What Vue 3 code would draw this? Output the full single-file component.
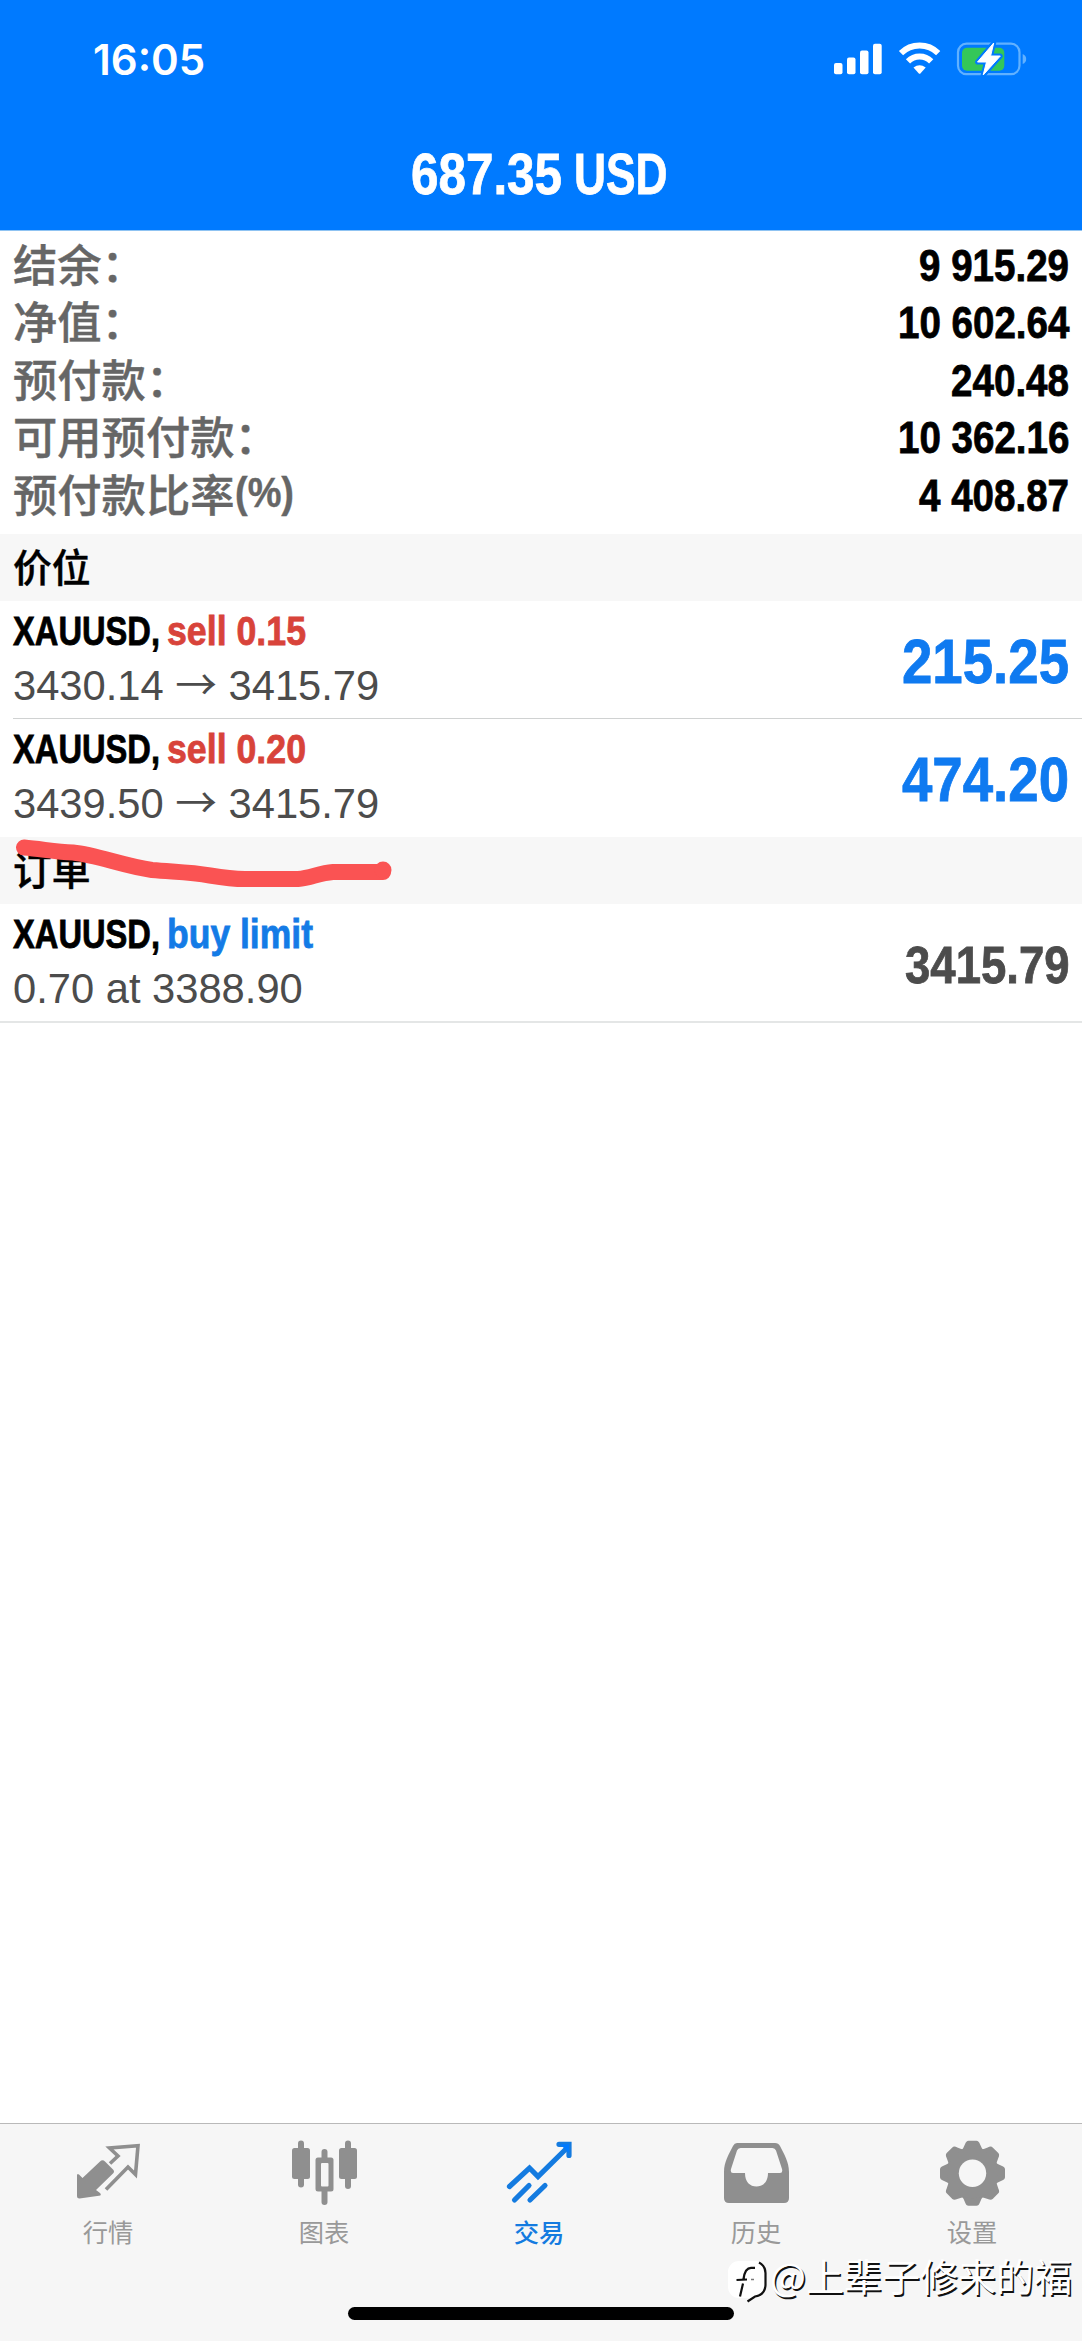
<script setup>
import { h } from 'vue'

// Advance widths of the bold face, in em, for the characters that differ from a digit.
const ADVANCE = {
  ' ': 0.278, '.': 0.278, ',': 0.278, ':': 0.333, '(': 0.333, ')': 0.333, '%': 0.889,
  X: 0.667, A: 0.722, U: 0.722, S: 0.667, D: 0.722,
  l: 0.278, i: 0.278, t: 0.333, m: 0.889, b: 0.611, u: 0.611,
}

// One line of bold text condensed to the width w at font size s.
const FitText = ({ t, w, s }) => {
  const natural = [...t].reduce((sum, c) => sum + (ADVANCE[c] ?? 0.556), 0) * s
  return h('span', {
    style: {
      display: 'block', flex: 'none', width: `${w}px`, height: `${s}px`,
      fontSize: `${s}px`, lineHeight: `${s}px`, whiteSpace: 'pre',
    },
  }, [
    h('span', {
      style: {
        display: 'block', width: 'max-content',
        transformOrigin: '0 50%', transform: `scaleX(${w / natural})`,
      },
    }, t),
  ])
}
FitText.props = ['t', 'w', 's']

const summary = [
  { label: '结余：', value: '9 915.29', w: 150 },
  { label: '净值：', value: '10 602.64', w: 171.4 },
  { label: '预付款：', value: '240.48', w: 118 },
  { label: '可用预付款：', value: '10 362.16', w: 171.4 },
  { label: '预付款比率', unit: '(%)', value: '4 408.87', w: 150 },
]

const positions = [
  { side: 'sell 0.15', from: '3430.14', to: '3415.79', profit: '215.25' },
  { side: 'sell 0.20', from: '3439.50', to: '3415.79', profit: '474.20' },
]
</script>

<template>
  <div class="screen">
    <header class="top">
      <div class="status">
        <span class="clock">16:05</span>
        <svg class="status-icons" width="200" height="40" viewBox="0 0 200 40">
          <g fill="#fff">
            <rect x="4" y="23" width="8.5" height="11.3" rx="2" />
            <rect x="17" y="17.5" width="8.5" height="16.8" rx="2" />
            <rect x="30" y="10.5" width="8.5" height="23.8" rx="2" />
            <rect x="43" y="3.7" width="8.7" height="30.6" rx="2" />
          </g>
          <g fill="none" stroke="#fff" stroke-width="6">
            <path d="M71 13.2A26.5 26.5 0 0 1 108.200 13.200" />
            <path d="M78 21.300A16.500 16.500 0 0 1 101.200 21.300" />
          </g>
          <path d="M83.500 27.500Q89.600 23.200 95.700 27.500L90.600 33.300Q89.600 34.300 88.600 33.300Z" fill="#fff" />
          <rect x="128" y="3.700" width="61.500" height="30.500" rx="8.500" fill="none" stroke="#61b1ff" stroke-width="2.200" />
          <path d="M192.700 14q3.500 1.500 3.500 5t-3.500 5z" fill="#61b1ff" />
          <rect x="132" y="7.700" width="42.300" height="23" rx="5" fill="#34c759" />
          <path d="M163.700 3L147.500 22H156.500L153.200 35L170.300 16H160.600Z" fill="#fff" stroke="#007aff" stroke-width="5" stroke-linejoin="round" />
          <path d="M163.700 3L147.500 22H156.500L153.200 35L170.300 16H160.600Z" fill="#fff" stroke="#fff" stroke-width="1" stroke-linejoin="round" />
        </svg>
      </div>
      <h1 class="title">
        <FitText class="cond" t="687.35" :w="151" :s="57" />
        <FitText class="cond" t="USD" :w="93.500" :s="57" />
      </h1>
    </header>

    <section class="summary">
      <div v-for="r in summary" :key="r.label" class="sum-row">
        <span class="sum-label">{{ r.label }}<FitText v-if="r.unit" class="unit" :t="r.unit" :w="59" :s="42" /></span>
        <FitText class="cond sum-value" :t="r.value" :w="r.w" :s="45" />
      </div>
    </section>

    <h2 class="band"><span>价位</span></h2>
    <div v-for="p in positions" :key="p.profit" class="deal">
      <div class="deal-info">
        <div class="deal-name">
          <FitText class="cond" t="XAUUSD," :w="147" :s="41.500" />
          <FitText class="cond sell" :t="p.side" :w="139" :s="41.500" />
        </div>
        <div class="deal-price">{{ p.from }} <span class="arrow">→</span> {{ p.to }}</div>
      </div>
      <FitText class="cond profit" :t="p.profit" :w="167" :s="63" />
    </div>

    <h2 class="band">
      <span>订单</span>
      <svg class="scribble" width="400" height="67" viewBox="0 0 400 67">
        <path d="M24 10.500C42 12 56 15 73 15.500C97 18 124 29 152 33C174 35 190 35 210 38.500C225 41 232 42 245 42H298C311 41 319 36 333 35H383" />
        <circle cx="383" cy="33" r="8.500" />
      </svg>
    </h2>
    <div class="deal last">
      <div class="deal-info">
        <div class="deal-name">
          <FitText class="cond" t="XAUUSD," :w="147" :s="41.500" />
          <FitText class="cond buy" t="buy limit" :w="146" :s="41.500" />
        </div>
        <div class="deal-price">0.70 at 3388.90</div>
      </div>
      <FitText class="cond current" t="3415.79" :w="164.500" :s="52.500" />
    </div>

    <nav class="tabs">
      <a class="tab">
        <svg width="70" height="70" viewBox="0 0 70 70">
          <path d="M3 27.500Q3 25 5 26.500L8.500 30L26 13.500Q28.500 11 31 13.500L39 21.500Q41 23.500 39 25.500L22 42L26 45Q28 47.500 25 47.800L5.500 50.500Q3 50.500 3 48Z" fill="#8f8f8f" />
          <path d="M36 15.500L44 8L35.500 0L64 -2.300L61.500 26.500L54 19L32 41.500" fill="none" stroke="#8f8f8f" stroke-width="3.600" />
        </svg>
        <span>行情</span>
      </a>
      <a class="tab">
        <svg width="70" height="70" viewBox="0 0 70 70">
          <g fill="#8f8f8f">
            <rect x="2" y="0" width="18" height="31" rx="2.500" />
            <rect x="8" y="-7.500" width="6" height="47" rx="3" />
            <rect x="49" y="0" width="18" height="31" rx="2.500" />
            <rect x="55" y="-7.500" width="6" height="48.500" rx="3" />
            <rect x="25.500" y="9.500" width="18" height="34" rx="2.500" />
            <rect x="31.500" y="1" width="6" height="56" rx="3" />
          </g>
          <rect x="31" y="15" width="7.500" height="23.500" rx="1" fill="#f6f6f6" />
        </svg>
        <span>图表</span>
      </a>
      <a class="tab active">
        <svg width="70" height="70" viewBox="0 0 70 70">
          <g fill="none" stroke="#147be0" stroke-width="5.200" stroke-linecap="round">
            <path d="M3.500 38.500L23.500 20L32 28.500L62 -1" />
            <path d="M53 -3.700H63V7.500" />
            <path d="M8.500 52L23 37.500M24 52L39 37.500" />
          </g>
          <path d="M54 -3.700H63V5Z" fill="#007aff" />
        </svg>
        <span>交易</span>
      </a>
      <a class="tab">
        <svg width="70" height="70" viewBox="0 0 70 70">
          <path fill="#8f8f8f" fill-rule="evenodd" d="M15-5H53Q56.500-5 58-2C62 6 67 14 67 24V50Q67 55 62 55H7Q2 55 2 50V24C2 14 7 6 11-2Q12.500-5 15-5ZM18.500 0Q16 0 15 2.500L9 21Q8 25 11 25H23C23 34 28 38.500 34.500 38.500S46 34 46 25H58Q61 25 60 21L54 2.500Q53 0 50.500 0Z" />
        </svg>
        <span>历史</span>
      </a>
      <a class="tab">
        <svg width="70" height="70" viewBox="-35 -35 70 70">
          <g transform="translate(-.5 -9.800)" fill="#8f8f8f">
            <path v-for="n in 8" :key="n" :transform="`rotate(${n * 45})`" d="M-11.500-22Q-9-25-7.500-29Q-6.300-32.500-4-32.500H4Q6.300-32.500 7.500-29Q9-25 11.500-22L9 0H-9Z" />
            <circle r="25" />
            <circle r="13.700" fill="#f6f6f6" />
          </g>
        </svg>
        <span>设置</span>
      </a>
      <div class="home-bar"></div>
      <div class="watermark">
        <svg width="43" height="46" viewBox="0 0 43 46">
          <rect x="0" y="2" width="38" height="37" rx="11" fill="#fff" />
          <path d="M12 37.500L15 24.500M8.500 21L19 20.500M15.500 20Q17 8.800 23 8.800H27M31 3.500Q37.500 7 37.500 14V26Q37 36 27 37.500L19.500 42.500" fill="none" stroke="#111" stroke-width="2.200" />
          <path d="M23 20.500h3" stroke="#777" stroke-width="1.500" />
        </svg>
        <span>@上辈子修来的福</span>
      </div>
    </nav>
  </div>
</template>

<style>
body { margin: 0; background: #fff; }
</style>

<style scoped>
.screen {
  display: flex;
  flex-direction: column;
  width: 1082px;
  height: 2341px;
  overflow: hidden;
  background: #fff;
  font-family: "Liberation Sans", "Noto Sans CJK SC", sans-serif;
  color: #000;
}
svg { display: block; flex: none; overflow: visible; }
h1, h2 { margin: 0; }
.cond { font-family: "Liberation Sans", sans-serif; font-weight: 700; -webkit-text-stroke: 0.800px currentColor; }

.top { height: 231px; flex: none; box-sizing: border-box; background: #007aff; border-bottom: 1px solid #8fc3f2; }
.status {
  display: flex;
  justify-content: space-between;
  height: 110px;
  padding: 38px 52px 0 93px;
  box-sizing: border-box;
}
.clock { font: 600 42px/43px "Inter", sans-serif; color: #fff; white-space: nowrap; }
.status-icons { margin-top: 2px; }
.title { display: flex; gap: 12px; padding: 36px 0 0 411px; color: #fff; }

.summary { height: 303px; flex: none; padding: 3px 13px 0; box-sizing: border-box; }
.sum-row { display: flex; justify-content: space-between; align-items: center; height: 57.500px; }
.sum-label {
  display: flex;
  align-items: center;
  height: 57px;
  font: 500 44.300px/54px "Noto Sans CJK SC", sans-serif;
  color: #666;
  -webkit-text-stroke: 0.400px currentColor;
}
.sum-value { margin-top: 5px; }
.unit { font-family: "Liberation Sans", sans-serif; font-weight: 700; }

.band {
  position: relative;
  height: 67px;
  flex: none;
  padding-left: 13px;
  box-sizing: border-box;
  background: #f7f7f7;
  font: 500 38.800px/63px "Noto Sans CJK SC", sans-serif;
  -webkit-text-stroke: 0.400px currentColor;
}
.scribble { position: absolute; left: 0; top: 0; z-index: 1; }
.scribble path { fill: none; stroke: #fa5353; stroke-width: 16; stroke-linecap: round; stroke-linejoin: round; }
.scribble circle { fill: #fa5353; }

.deal {
  display: flex;
  justify-content: space-between;
  align-items: center;
  height: 118px;
  flex: none;
  margin-left: 13px;
  padding-right: 13px;
  box-sizing: border-box;
}
.deal:has(+ .deal) { border-bottom: 1px solid #d0d2d2; }
.deal.last { height: 119px; margin-left: 0; padding-left: 13px; border-bottom: 2px solid #e4e6e6; }
.deal-info { align-self: flex-start; padding-top: 8.500px; }
.deal-name { display: flex; gap: 7px; }
.deal-price { margin-top: 10.500px; font-size: 41.700px; line-height: 48px; color: #4c4c4c; white-space: nowrap; }
.arrow { font-family: "Noto Sans CJK SC", sans-serif; line-height: 1; }
.sell { color: #d8433a; }
.buy { color: #147be6; }
.profit { margin-top: 3px; color: #0f7af0; }
.current { margin-top: 6px; color: #4c4c4c; }

.tabs {
  position: relative;
  display: flex;
  flex: none;
  height: 218px;
  margin-top: auto;
  padding-right: 2px;
  box-sizing: border-box;
  border-top: 1px solid #b9b9b9;
  background: #f6f6f6;
}
.tab { flex: 1; display: flex; flex-direction: column; align-items: center; padding-top: 24px; color: #999; }
.tab svg { margin-left: 2px; }
.tab span { margin-top: -2px; font: 400 25.300px/30px "Noto Sans CJK SC", sans-serif; }
.active span { margin-left: -2px; color: #147be0; font-weight: 500; }
.home-bar {
  position: absolute;
  left: 348px;
  bottom: 21px;
  width: 386px;
  height: 13px;
  border-radius: 7px;
  background: #000;
}
.watermark { position: absolute; left: 728px; bottom: 36px; display: flex; align-items: center; white-space: nowrap; }
.watermark span {
  margin: -14px 0 0 -1px;
  font: 400 38px/50px "Noto Sans CJK SC", sans-serif;
  color: #fff;
  text-shadow: 1.500px 1.500px 0 #111;
}
</style>
